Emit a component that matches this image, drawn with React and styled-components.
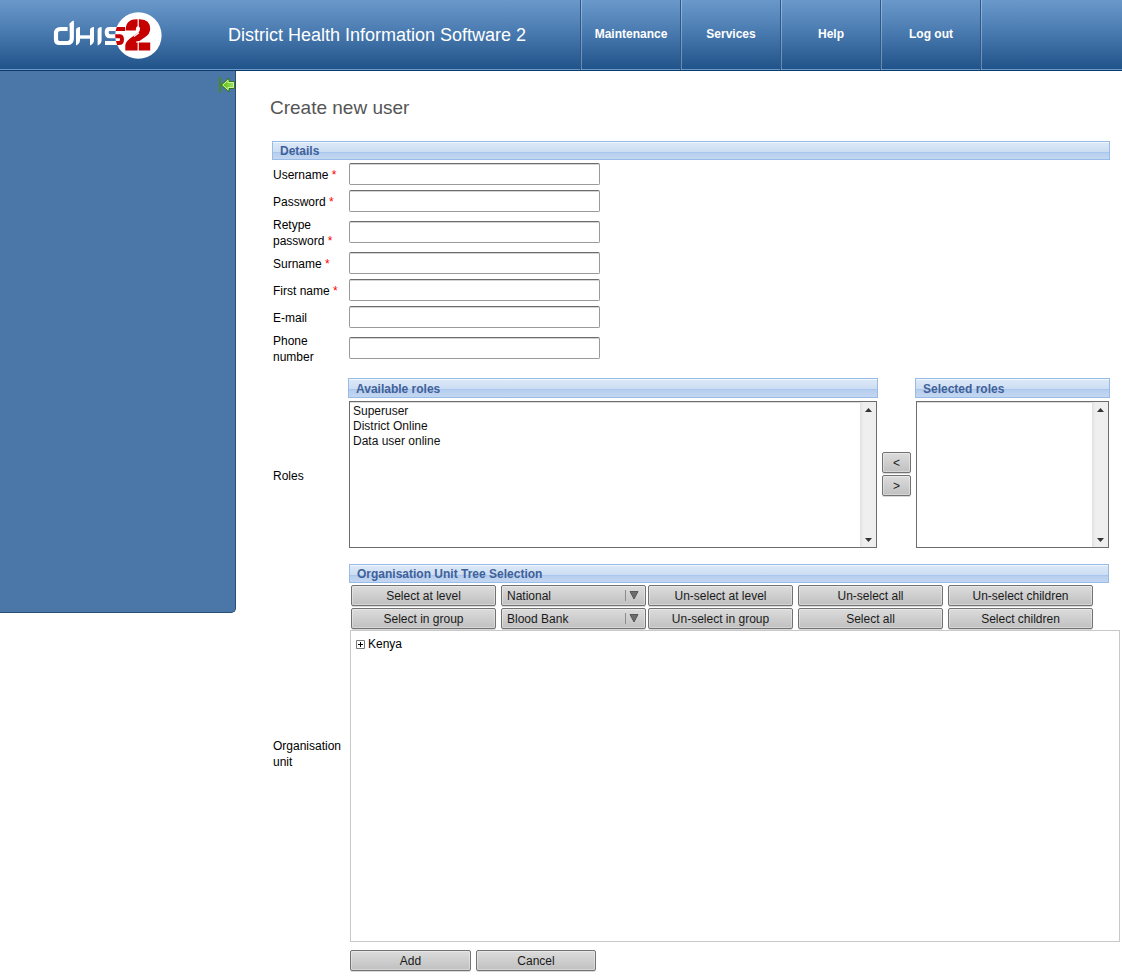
import React from "react";
import styled, { createGlobalStyle } from "styled-components";

const GlobalStyle = createGlobalStyle`
  * { box-sizing: border-box; }
  body {
    margin: 0;
    background: #fff;
    color: #000;
    font: 12px/16px "Liberation Sans", Arial, sans-serif;
  }
`;

const Header = styled.header`
  display: flex;
  height: 71px;
  background: linear-gradient(#6a98cb, #4a7bb0 45%, #1f5288);
  border-bottom: 1px solid #0d3a6c;
  box-shadow: inset 0 -1px #6a98c8;
  color: #fff;
`;

const Brand = styled.div`
  display: flex;
  align-items: center;
  width: 580px;
  padding-left: 52px;
  gap: 66px;
  font-size: 18px;
  line-height: 24px;
`;

const Nav = styled.nav`
  display: flex;
  border-right: 1px solid #2c5788;
  box-shadow: 1px 0 #ffffff4d;
`;

const NavLink = styled.a`
  display: flex;
  align-items: center;
  justify-content: center;
  width: 100px;
  padding: 0 0 2px 1px;
  border-left: 1px solid #2c5788;
  box-shadow: inset 1px 0 #ffffff4d;
  color: #fff;
  font-weight: bold;
  text-decoration: none;
`;

const Page = styled.div`
  display: flex;
  align-items: flex-start;
`;

const Sidebar = styled.aside`
  display: flex;
  flex: none;
  align-items: flex-start;
  justify-content: flex-end;
  width: 236px;
  height: 542px;
  padding-top: 4px;
  background: #4a77a8;
  border: solid #274d78;
  border-width: 0 1px 1px 0;
  border-bottom-right-radius: 5px;
`;

const CollapseButton = styled.button`
  display: flex;
  padding: 0;
  border: 0;
  background: none;
`;

const Main = styled.main`
  flex: 1;
  min-width: 0;
  padding: 25px 12px 6px 36px;
`;

const Title = styled.h1`
  margin: 0 0 21px -2px;
  color: #555;
  font-size: 19px;
  font-weight: normal;
  line-height: 24px;
`;

const SectionBar = styled.h2`
  height: ${(p) => (p.$tall ? 20 : 19)}px;
  margin: 0;
  padding: 1px 7px 0;
  border: 1px solid #99bbe8;
  background: linear-gradient(
    #f0f6fd 0 1px, #dbe8f7 1px, #ccddf3 10px,
    #a9c6ec 10px 11px, #b7ceee 11px, #c3d7f1
  );
  color: #3f6199;
  font-size: 12px;
  font-weight: bold;
  line-height: ${(p) => (p.$tall ? 18 : 17)}px;
`;

const FieldRow = styled.div`
  display: grid;
  grid-template-columns: 72px 251px;
  column-gap: 5px;
  align-items: center;
  padding: 3px 0 2px;
`;

const Label = styled.label`
  margin: 0 0 -2px;
  padding-left: 1px;
`;

const Required = styled.span`
  color: #f00;
`;

const TextInput = styled.input`
  width: 100%;
  height: 22px;
  padding: 2px 4px;
  border: 1px solid #9a9a9a;
  border-top-color: #6c6c6c;
  border-radius: 2px;
  box-shadow: inset 0 1px #d4d4d4;
  background: #fff;
  font: inherit;
`;

const RolesGrid = styled.div`
  display: grid;
  grid-template-columns: 76px minmax(0, 1fr) 37px 195px;
  row-gap: 3px;
  margin-top: 13px;
`;

const RolesLabel = styled(Label)`
  grid-column: 1;
  align-self: center;
`;

const AvailableBar = styled(SectionBar)`
  grid-column: 2;
`;

const SelectedBar = styled(SectionBar)`
  grid-column: 4;
`;

const ListFrame = styled.div`
  display: flex;
  height: 147px;
  margin: 0 1px;
  border: 1px solid #6c6c6c;
  box-shadow: inset 0 1px #dcdcdc;
`;

const ListSelect = styled.select`
  flex: 1;
  min-width: 0;
  margin-top: 1px;
  padding: 1px 3px;
  border: 0;
  outline: 0;
  background: #fff;
  color: #111;
  font: inherit;
  scrollbar-width: none;

  option {
    height: 15px;
    min-height: 15px;
    padding: 0;
    line-height: 15px;
  }
`;

const ScrollTrack = styled.div`
  display: flex;
  flex-direction: column;
  align-items: center;
  justify-content: space-between;
  width: 16px;
  padding: 6px 0 5px;
  background: linear-gradient(90deg, #e0e0e0, #eee 3px, #efefef);
`;

const MoveButtons = styled.div`
  display: flex;
  flex-direction: column;
  align-items: center;
  justify-content: center;
  gap: 2px;
  padding-bottom: 2px;
`;

const Button = styled.button`
  width: ${(p) => p.$width || 145}px;
  height: 21px;
  padding: 1px 0 0;
  border: 1px solid #727272;
  border-radius: 2px;
  background: linear-gradient(#dcdcdc, #c0c0c0);
  box-shadow: inset 0 0 0 1px #ffffff59, 0 1px #d9d9d9;
  color: #1a1a1a;
  font: inherit;
`;

const OrgRow = styled.div`
  display: grid;
  grid-template-columns: 72px minmax(0, 1fr);
  column-gap: 5px;
  align-items: center;
  margin-top: 16px;
`;

const OrgBar = styled(SectionBar)`
  margin-right: 1px;
`;

const Toolbar = styled.div`
  display: flex;
  flex-direction: column;
  gap: 2px;
  padding: 2px 0 1px 2px;
`;

const ToolRow = styled.div`
  display: flex;
  gap: 5px;
`;

const Picker = styled.div`
  position: relative;
  width: 145px;
  margin-right: -3px;
`;

const PickerSelect = styled.select`
  display: block;
  appearance: none;
  width: 100%;
  height: 21px;
  padding: 1px 24px 0 5px;
  border: 1px solid #727272;
  border-radius: 2px;
  background: linear-gradient(#dcdcdc, #c0c0c0);
  box-shadow: inset 0 0 0 1px #ffffff59, 0 1px #d9d9d9;
  color: #1a1a1a;
  font: inherit;
`;

const PickerMark = styled.svg`
  position: absolute;
  top: 5px;
  right: 6px;
  pointer-events: none;
`;

const Tree = styled.div`
  height: 312px;
  margin: 0 -10px 0 1px;
  padding: 5px;
  border: 1px solid #c8c8c8;
`;

const TreeNode = styled.div`
  display: flex;
  align-items: center;
  gap: 3px;
`;

const ExpandButton = styled.button`
  display: flex;
  padding: 0;
  border: 0;
  background: none;
`;

const Actions = styled.div`
  display: flex;
  gap: 5px;
  padding: 8px 0 0 78px;
`;

function Logo() {
  const curve =
    "M73 18.9H57.5Q54.7 18.9 54.7 22.3Q54.7 26.3 58 26.3H67.5Q70 26.3 70 29.5Q70 33 67 33H53";
  return (
    <svg width="110" height="50" viewBox="0 0 110 50" role="img" aria-label="DHIS 2">
      <defs>
        <clipPath id="disc">
          <circle cx="86.4" cy="25.5" r="23.2" />
        </clipPath>
      </defs>
      <circle cx="86.4" cy="25.5" r="23.2" fill="#fff" />
      <g fill="none" stroke="#fff">
        <path strokeWidth="4.2" d="M15.6 19H8.5Q4 19 4 23.5V29.5Q4 33 7.5 33H15.5Q19.8 33 19.8 28.5V13" />
        <path strokeWidth="3.4" d="M25.8 27H40" />
      </g>
      <g fill="#fff">
        <path d="M17.7 14.5Q17.8 12 21.9 10.4V16H17.7Z" />
        <path d="M24 20Q24 17.3 28 17V30Q28 34 24 35.4Z" />
        <path d="M38 20Q38 17.3 42 17V30Q42 34 38 35.4Z" />
        <path d="M45.6 20Q45.6 17.3 49.6 17V30Q49.6 34 45.6 35.4Z" />
      </g>
      <g fill="none" strokeWidth="4">
        <path stroke="#fff" d={curve} />
        <path clipPath="url(#disc)" stroke="#c60000" d={curve} />
      </g>
      <path
        fill="#c60000"
        d="M73.6 20.5Q73.6 9.4 84 9.2H88Q98.2 9.6 98.2 18.8Q98.2 24 92.5 27.6L86 32H98.2V40.4H73.3V35Q74 31 80 27L86.4 22.6Q88 21 88 18.8Q88 16.2 86 16.2Q83.8 16.2 83.8 20.5Z"
      />
      <path fill="none" stroke="#fff" strokeWidth="1.2" d="M86.2 8V17M86.2 31V42M84 32H99M82 26.4L87 22.8" />
    </svg>
  );
}

function CollapseIcon() {
  return (
    <svg width="17" height="18" viewBox="0 0 17 18" aria-hidden="true">
      <defs>
        <linearGradient id="leaf" x1="0" x2="1">
          <stop offset="0" stopColor="#57b90c" />
          <stop offset="1" stopColor="#a4e268" />
        </linearGradient>
      </defs>
      <path d="M2 2V17.5" stroke="#4b8a1d" strokeWidth="2" />
      <path d="M3.2 10L11 3V6.5H16.5V13.5H11V17Z" fill="url(#leaf)" stroke="#37751b" />
      <path d="M4.8 10L10 5.3V7.5H15.5V12.5H10V14.7Z" fill="none" stroke="#c6f49b" />
    </svg>
  );
}

function ScrollArrow({ down }) {
  return (
    <svg width="7" height="4" viewBox="0 0 7 4" aria-hidden="true">
      <path d={down ? "M0 0H7L3.5 4Z" : "M0 4H7L3.5 0Z"} fill="#333" />
    </svg>
  );
}

function Listbox({ id, label, options = [] }) {
  return (
    <ListFrame>
      <ListSelect id={id} aria-label={label} multiple size={9}>
        {options.map((o) => (
          <option key={o}>{o}</option>
        ))}
      </ListSelect>
      <ScrollTrack>
        <ScrollArrow />
        <ScrollArrow down />
      </ScrollTrack>
    </ListFrame>
  );
}

function Dropdown({ label, option }) {
  return (
    <Picker>
      <PickerSelect aria-label={label}>
        <option>{option}</option>
      </PickerSelect>
      <PickerMark width="15" height="12" viewBox="0 0 15 12" aria-hidden="true">
        <path d="M.5 0V11" stroke="#8c8c8c" />
        <path d="M5 1.5H13L9 9Z" fill="#6c6c6c" stroke="#444" strokeWidth=".8" />
      </PickerMark>
    </Picker>
  );
}

const fields = [
  { id: "username", label: "Username", required: true },
  { id: "password", label: "Password", required: true, type: "password" },
  { id: "retype", label: "Retype password", required: true, type: "password" },
  { id: "surname", label: "Surname", required: true },
  { id: "firstName", label: "First name", required: true },
  { id: "email", label: "E-mail", type: "email" },
  { id: "phone", label: "Phone number", type: "tel" },
];

const toolRows = [
  ["Select at level", ["Level", "National"], "Un-select at level", "Un-select all", "Un-select children"],
  ["Select in group", ["Group", "Blood Bank"], "Un-select in group", "Select all", "Select children"],
];

export default function App() {
  return (
    <>
      <GlobalStyle />
      <Header>
        <Brand>
          <Logo />
          <span>District Health Information Software 2</span>
        </Brand>
        <Nav>
          {["Maintenance", "Services", "Help", "Log out"].map((item) => (
            <NavLink key={item} href="#">{item}</NavLink>
          ))}
        </Nav>
      </Header>
      <Page>
        <Sidebar>
          <CollapseButton type="button" aria-label="Hide menu">
            <CollapseIcon />
          </CollapseButton>
        </Sidebar>
        <Main>
          <Title>Create new user</Title>
          <form onSubmit={(e) => e.preventDefault()}>
            <SectionBar>Details</SectionBar>
            {fields.map((f) => (
              <FieldRow key={f.id}>
                <Label htmlFor={f.id}>
                  {f.label}
                  {f.required && <Required> *</Required>}
                </Label>
                <TextInput id={f.id} type={f.type || "text"} />
              </FieldRow>
            ))}
            <RolesGrid>
              <AvailableBar $tall>Available roles</AvailableBar>
              <SelectedBar $tall>Selected roles</SelectedBar>
              <RolesLabel htmlFor="availableRoles">Roles</RolesLabel>
              <Listbox id="availableRoles" options={["Superuser", "District Online", "Data user online"]} />
              <MoveButtons>
                <Button type="button" $width={29}>&lt;</Button>
                <Button type="button" $width={29}>&gt;</Button>
              </MoveButtons>
              <Listbox id="selectedRoles" label="Selected roles" />
            </RolesGrid>
            <OrgRow>
              <Label as="span">Organisation unit</Label>
              <div>
                <OrgBar>Organisation Unit Tree Selection</OrgBar>
                <Toolbar>
                  {toolRows.map((row) => (
                    <ToolRow key={row[0]}>
                      {row.map((t) =>
                        Array.isArray(t) ? (
                          <Dropdown key={t[0]} label={t[0]} option={t[1]} />
                        ) : (
                          <Button key={t} type="button">{t}</Button>
                        )
                      )}
                    </ToolRow>
                  ))}
                </Toolbar>
                <Tree>
                  <TreeNode>
                    <ExpandButton type="button" aria-label="Expand Kenya">
                      <svg width="9" height="9" viewBox="0 0 9 9" aria-hidden="true">
                        <path d="M.5.5H8.5V8.5H.5Z" fill="#fff" stroke="#777" />
                        <path d="M2 4.5H7M4.5 2V7" stroke="#000" />
                      </svg>
                    </ExpandButton>
                    <span>Kenya</span>
                  </TreeNode>
                </Tree>
              </div>
            </OrgRow>
            <Actions>
              <Button type="submit" $width={121}>Add</Button>
              <Button type="button" $width={120}>Cancel</Button>
            </Actions>
          </form>
        </Main>
      </Page>
    </>
  );
}
